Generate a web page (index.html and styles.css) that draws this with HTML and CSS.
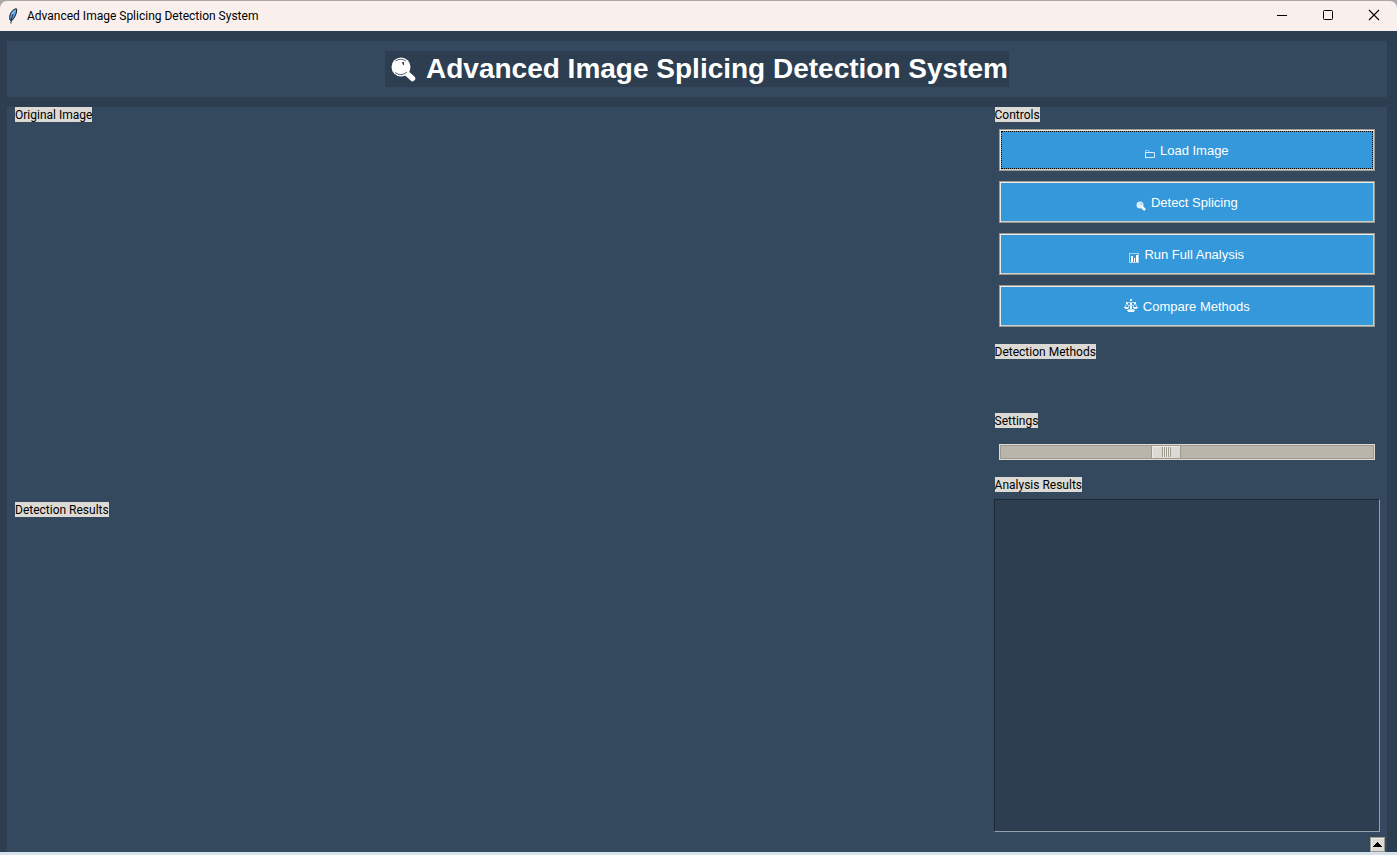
FILE: index.html
```
<!DOCTYPE html>
<html lang="en">
<head>
<meta charset="utf-8">
<title>Advanced Image Splicing Detection System</title>
<link rel="stylesheet" href="styles.css">
</head>
<body>
<div class="window">
  <header class="titlebar">
    <svg class="feather" width="10" height="16" viewBox="0 0 10 16" aria-hidden="true">
      <path d="M8 .7C5 1.500 2 4.500 1.700 8.500L2 12l2 .5C7 9.500 9 5 8.700 1z" fill="#5b9be0" stroke="#1a222c"/>
      <path d="M5 6.500C4 9 3.200 12 2.800 15.500" fill="none" stroke="#1a222c"/>
      <path d="M4 6l3-3.500" stroke="#a9d0f8"/>
    </svg>
    <span class="caption">Advanced Image Splicing Detection System</span>
    <div class="window-buttons">
      <button type="button" aria-label="Minimize"><svg width="12" height="12" viewBox="0 0 12 12"><path d="M1 6.500h10" stroke="#000"/></svg></button>
      <button type="button" aria-label="Maximize"><svg width="12" height="12" viewBox="0 0 12 12"><rect x="1.500" y="1.500" width="9" height="9" rx="1" fill="none" stroke="#000"/></svg></button>
      <button type="button" aria-label="Close"><svg width="12" height="12" viewBox="0 0 12 12"><path d="M1 1l10 10M11 1L1 11" stroke="#000" stroke-width="1.100"/></svg></button>
    </div>
  </header>
  <div class="client">
    <div class="banner">
      <h1 class="heading">
        <svg width="26" height="26" viewBox="0 0 26 26" aria-hidden="true">
          <path d="M17 17.500l5.500 5" stroke="#fff" stroke-width="5.500" stroke-linecap="round"/>
          <circle cx="11" cy="11" r="9.500" fill="#fff"/>
          <path d="M5.500 5Q10.500 1.500 16 5M5 16.500Q11 21 17 16" fill="none" stroke="#2c3e50" stroke-width=".8"/>
          <path d="M12 6h2v3h-1z" fill="#2c3e50"/>
        </svg>
        <span>Advanced Image Splicing Detection System</span>
      </h1>
    </div>
    <main class="workspace">
      <div class="images">
        <section><h2 class="label">Original Image</h2></section>
        <section><h2 class="label">Detection Results</h2></section>
      </div>
      <aside class="side">
        <section class="controls">
          <h2 class="label">Controls</h2>
          <div class="actions">
            <button type="button" class="action focused">
              <svg class="low" width="10" height="11" viewBox="0 0 10 11" aria-hidden="true"><path d="M.5 10.500V2.500h3l1 1.500" fill="none" stroke="#8ecbf2"/><path d="M.5 4.500h9v5h-9z" fill="none" stroke="#d5edfc"/></svg>
              <span>Load Image</span></button>
            <button type="button" class="action">
              <svg class="low" width="10" height="11" viewBox="0 0 10 11" aria-hidden="true"><circle cx="4" cy="5" r="3.500" fill="#dff1fc"/><path d="M6 7l3 3" stroke="#fff" stroke-width="2.500"/><path d="M4 3.500h1.500V5" fill="none" stroke="#8cc6ee"/></svg>
              <span>Detect Splicing</span></button>
            <button type="button" class="action">
              <svg class="low" width="10" height="11" viewBox="0 0 10 11" aria-hidden="true"><rect x=".5" y="1.500" width="9" height="9" fill="#3498db" stroke="#a9d7f5"/><path d="M2 4h2v6H2zM5 6h1v4H5zM7 3h2v7H7z" fill="#fff"/></svg>
              <span>Run Full Analysis</span></button>
            <button type="button" class="action">
              <svg width="14" height="14" viewBox="0 0 14 14" aria-hidden="true"><path d="M6 0h2v2H6zM2 3h2v2H2zM10 3h2v2h-2zM6 3h2v8H6zM0 8h5v1H4v1H1V9H0zM9 8h5v1h-1v1h-3V9H9zM3 11h8v1h-1v1H4v-1H3z" fill="#f2f9fe"/><path d="M3 3.500h8M2.500 5L1 8M3.500 5L5 8M10.500 5L9 8M11.500 5L13 8M4.500 6.500h5M4 10.500h6" stroke="#b5ddf7" fill="none"/></svg>
              <span>Compare Methods</span></button>
          </div>
        </section>
        <section class="methods"><h2 class="label">Detection Methods</h2></section>
        <section class="settings">
          <label class="label" for="level">Settings</label>
          <input class="slider" id="level" type="range" min="0" max="100" value="44">
        </section>
        <section class="results">
          <label class="label" for="output">Analysis Results</label>
          <textarea class="output" id="output" spellcheck="false"></textarea>
        </section>
        <button type="button" class="scroll-up" aria-label="Scroll up"><svg width="9" height="5" viewBox="0 0 9 5"><path d="M4 0h1v1h1v1h1v1h1v1h1v1H0V4h1V3h1V2h1V1h1z" fill="#000"/></svg></button>
      </aside>
    </main>
  </div>
</div>
</body>
</html>
```
FILE: styles.css
```
* { box-sizing: border-box; }
body {
  margin: 0;
  background: #aaa7a8;
  font-family: Roboto, "Open Sans", sans-serif;
  font-size: 12px;
  color: #000;
}
button { font: inherit; padding: 0; }
svg { display: block; flex: none; }
h1, h2 { margin: 0; font-weight: normal; }

.window {
  display: flex;
  flex-direction: column;
  min-height: 100vh;
  border-top: 1px solid #aaa7a8;
  border-bottom: 3px solid #d6e2eb;
}
.titlebar {
  display: flex;
  align-items: center;
  height: 30px;
  padding-left: 8px;
  background: #f9f0ee;
  border-radius: 7px 7px 0 0;
}
.caption { margin-left: 9px; }
.window-buttons { display: flex; margin-left: auto; }
.window-buttons button {
  display: flex;
  align-items: center;
  justify-content: center;
  width: 46px;
  height: 30px;
  padding-bottom: 2px;
  border: 0;
  background: none;
}

.client {
  flex: 1;
  display: flex;
  flex-direction: column;
  gap: 10px;
  padding: 10px 10px 0 7px;
  background: #2c3e50;
}
.banner {
  display: flex;
  justify-content: center;
  padding: 10px;
  background: #34495e;
}
.heading {
  display: flex;
  align-items: center;
  gap: 10px;
  height: 36px;
  padding: 0 1px 0 5px;
  background: #2c3e50;
  color: #fff;
  font: bold 28px/36px "Liberation Sans", Arial, sans-serif;
}
.workspace {
  flex: 1;
  display: grid;
  grid-template-columns: 5fr 2fr;
  padding: 0 2px 0 8px;
  background: #34495e;
}
.images { display: grid; grid-template-rows: 53fr 47fr; }
.label {
  display: block;
  width: fit-content;
  padding-top: 1px;
  background: #dcdad5;
  font-size: 12px;
  line-height: 14px;
}

.side { display: flex; flex-direction: column; }
.side section { padding-right: 5px; }
.side .label { margin-left: 1px; }
.actions {
  display: flex;
  flex-direction: column;
  gap: 10px;
  padding: 7px 5px 17px;
}
.action {
  display: flex;
  align-items: center;
  justify-content: center;
  gap: 5px;
  height: 42px;
  border: 1px solid #9e9a91;
  background: #3498db;
  box-shadow: inset 1px 1px #eeebe7, inset -1px -1px #cfcdc8;
  color: #fff;
  font: 13px "Liberation Sans", Arial, sans-serif;
}
.action .low { margin-top: 6px; }
.focused { outline: 1px dotted #000; outline-offset: -3px; }
.methods { min-height: 69px; }

.slider {
  appearance: none;
  display: block;
  width: calc(100% - 10px);
  height: 16px;
  margin: 16px 5px 17px;
  padding: 1px;
  border: 1px solid #dcdad5;
  background: #bab5ab;
  box-shadow: inset 0 0 0 1px #9e9a91;
}
.slider::-webkit-slider-thumb {
  appearance: none;
  width: 30px;
  height: 14px;
  border: 1px solid #9e9a91;
  background:
    repeating-linear-gradient(90deg, #9e9a91 0 1px, #eeebe7 1px 2px) center / 9px 10px no-repeat,
    #dcdad5;
  box-shadow: inset 1px 1px #eeebe7;
}
.results { flex: 1; display: flex; flex-direction: column; }
.output {
  flex: 1;
  width: 100%;
  margin: 7px 0 5px;
  border: 1px solid;
  border-color: #1c2834 #95a0aa #95a0aa #1c2834;
  background: #2c3e50;
  color: #fff;
  resize: none;
  outline: 0;
}
.scroll-up {
  display: flex;
  align-items: center;
  justify-content: center;
  align-self: flex-end;
  width: 15px;
  height: 15px;
  border: 1px solid #9e9a91;
  background: #dcdad5;
  box-shadow: inset 1px 1px #eeebe7;
}
```
